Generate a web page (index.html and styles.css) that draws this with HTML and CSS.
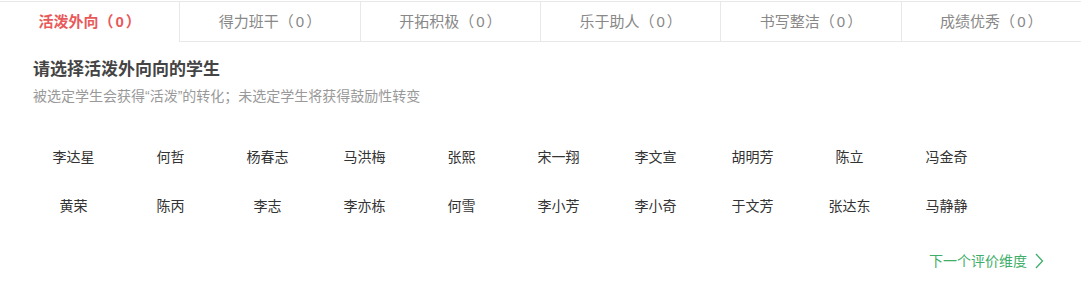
FILE: index.html
```html
<!DOCTYPE html>
<html lang="zh-CN">
<head>
  <meta charset="UTF-8" />
  <meta name="viewport" content="width=device-width, initial-scale=1" />
  <title>评价维度</title>
  <link rel="stylesheet" href="styles.css">
</head>
<body>
  <nav class="tabs">
    <div class="tab active">活泼外向（<span class="count">0</span>）</div>
    <div class="tab">得力班干（<span class="count">0</span>）</div>
    <div class="tab">开拓积极（<span class="count">0</span>）</div>
    <div class="tab">乐于助人（<span class="count">0</span>）</div>
    <div class="tab">书写整洁（<span class="count">0</span>）</div>
    <div class="tab">成绩优秀（<span class="count">0</span>）</div>
  </nav>

  <main class="panel">
    <h2 class="panel-title">请选择活泼外向向的学生</h2>
    <p class="panel-tip">被选定学生会获得“活泼”的转化；未选定学生将获得鼓励性转变</p>

    <ul class="students">
      <li>李达星</li>
      <li>何哲</li>
      <li>杨春志</li>
      <li>马洪梅</li>
      <li>张熙</li>
      <li>宋一翔</li>
      <li>李文宣</li>
      <li>胡明芳</li>
      <li>陈立</li>
      <li>冯金奇</li>
      <li>黄荣</li>
      <li>陈丙</li>
      <li>李志</li>
      <li>李亦栋</li>
      <li>何雪</li>
      <li>李小芳</li>
      <li>李小奇</li>
      <li>于文芳</li>
      <li>张达东</li>
      <li>马静静</li>
    </ul>

    <div class="footer">
      <a class="next" href="#">下一个评价维度
        <svg width="10" height="16" viewBox="0 0 10 16"><polyline points="2,1 8.5,8 2,15" fill="none" stroke="#3fae6a" stroke-width="1.3" /></svg>
      </a>
    </div>
  </main>
</body>
</html>
```

FILE: styles.css
```css
body {
  margin: 0;
  padding-top: 1px;
  font-family: "Liberation Sans", "Noto Sans CJK SC", sans-serif;
  background-color: #fff;
  color: #333;
}
.tabs {
  display: flex;
  border-top: 1px solid #e8e8e8;
}
.tab {
  flex: 1;
  height: 39px;
  line-height: 39px;
  text-align: center;
  font-size: 15px;
  color: #888;
  border-bottom: 1px solid #e8e8e8;
  border-left: 1px solid #e8e8e8;
  cursor: pointer;
}
.tab:first-child {
  border-left: none;
}
.tab.active {
  color: #e85a5a;
  font-weight: 700;
  border-bottom-color: transparent;
}
.tab .count {
  margin: 0 2px;
}
.panel {
  padding: 0 0 0 33px;
}
.panel-title {
  margin: 17px 0 0;
  font-size: 17px;
  line-height: 22px;
  font-weight: 700;
  color: #444;
}
.panel-tip {
  margin: 6px 0 0;
  font-size: 14px;
  line-height: 18px;
  color: #999;
}
.students {
  list-style: none;
  margin: 28px 0 0 -8px;
  padding: 0;
  display: grid;
  grid-template-columns: repeat(10, 97px);
}
.students li {
  height: 49px;
  line-height: 49px;
  text-align: center;
  font-size: 14px;
  color: #333;
  cursor: pointer;
}
.footer {
  display: flex;
  justify-content: flex-end;
  padding-right: 37px;
  margin-top: 20px;
}
.next {
  display: flex;
  align-items: center;
  gap: 7px;
  font-size: 14px;
  line-height: 20px;
  color: #3fae6a;
  text-decoration: none;
}
```
